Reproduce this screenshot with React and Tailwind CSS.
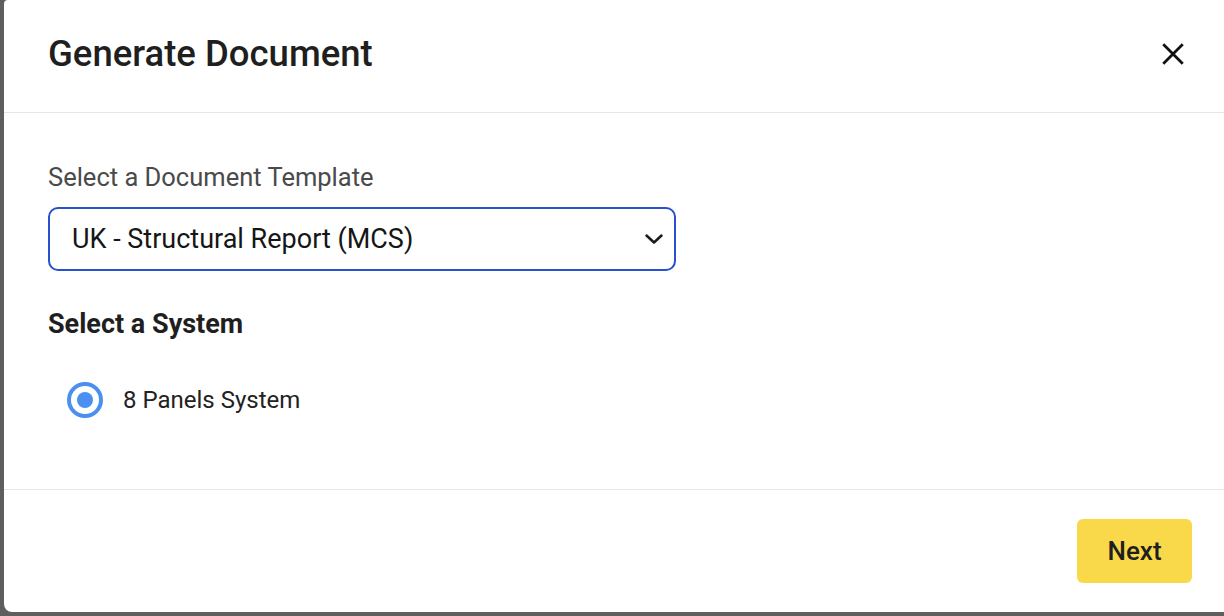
import React from "react";

const font = { fontFamily: "Roboto, 'Liberation Sans', sans-serif" };

const App = () => {
    return (
        <div className="h-screen w-full bg-[#5e5e5e] pl-1 pb-1 overflow-hidden" style={font}>
            <div className="h-full w-full bg-white rounded-bl-lg rounded-tl-sm flex flex-col">

                {/* Header */}
                <div className="h-[113px] shrink-0 flex items-center justify-between pl-11 pr-[37px] border-b border-[#e6e6e6]">
                    <h1 className="text-[36.5px] leading-[44px] font-medium text-[#1f1f1f] -mt-1">
                        Generate Document
                    </h1>
                    <button className="w-[28px] h-[28px] flex items-center justify-center -mt-1">
                        <svg width="26" height="26" viewBox="0 0 24 24" fill="none" stroke="#111" strokeWidth="2.6" strokeLinecap="butt">
                            <path d="M3 3L21 21M21 3L3 21" />
                        </svg>
                    </button>
                </div>

                {/* Body */}
                <div className="flex-1 pl-11 pt-12">
                    <label className="block text-[25.5px] leading-8 text-[#4a4a4a] mb-[14px]">
                        Select a Document Template
                    </label>
                    <div className="w-[628px] h-16 border-[2.5px] border-[#2a4fcf] rounded-[10px] flex items-center justify-between pl-[22px] pr-[10px]">
                        <span className="text-[27px] text-[#161616]">UK - Structural Report (MCS)</span>
                        <svg width="20" height="12" viewBox="0 0 20 12" fill="none" stroke="#1a1a1a" strokeWidth="2.5" strokeLinecap="round" strokeLinejoin="round">
                            <path d="M2.5 2.5L10 9.5L17.5 2.5" />
                        </svg>
                    </div>

                    <h2 className="text-[27px] leading-8 font-bold text-[#1f1f1f] mt-[37px]">
                        Select a System
                    </h2>

                    <div className="flex items-center gap-5 mt-[42px] pl-[19px]">
                        <div className="w-9 h-9 rounded-full border-[4px] border-[#4a90f0] flex items-center justify-center">
                            <div className="w-4 h-4 rounded-full bg-[#4a90f0]" />
                        </div>
                        <span className="text-[24px] text-[#222]">8 Panels System</span>
                    </div>
                </div>

                {/* Footer */}
                <div className="h-[123px] shrink-0 border-t border-[#e6e6e6] flex items-center justify-end pr-8">
                    <button className="w-[115px] h-16 rounded-md bg-[#f9d84a] text-[26px] font-medium text-[#1f1f1f]">
                        Next
                    </button>
                </div>
            </div>
        </div>
    );
};

export default App;
